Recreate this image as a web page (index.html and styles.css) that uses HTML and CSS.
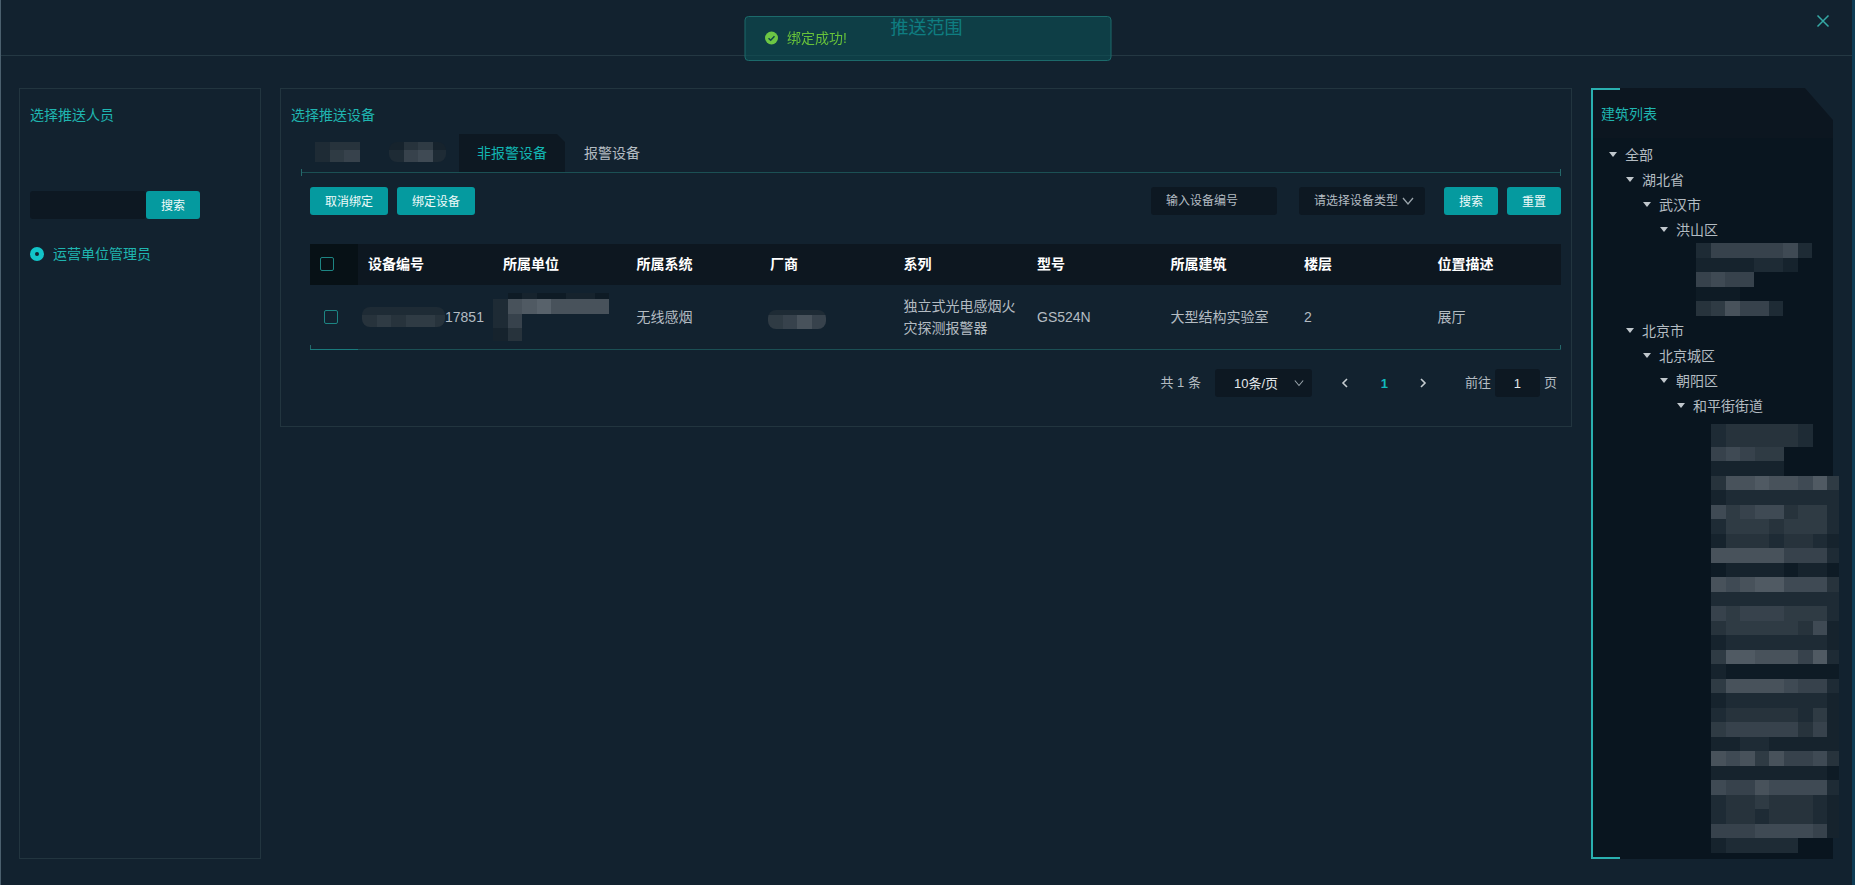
FILE: index.html
```html
<!DOCTYPE html>
<html lang="zh-CN">
<head>
<meta charset="utf-8">
<title>推送范围</title>
<link rel="stylesheet" href="styles.css">
</head>
<body>
<div class="dialog">
  <header class="dialog-header">
    <h1 class="dialog-title">推送范围</h1>
    <button class="close" type="button" aria-label="关闭">
      <svg viewBox="0 0 14 14" width="14" height="14"><path d="M1.500 1.500L12.500 12.500M12.500 1.500L1.500 12.500"/></svg>
    </button>
    <div class="toast" role="status">
      <svg viewBox="0 0 14 14" width="14" height="14"><circle cx="7" cy="7" r="6.500" fill="#6cc644"/><path d="M4 7.200L6.200 9.300L10 5.200" fill="none" stroke="#0e4a46" stroke-width="1.500"/></svg>
      <span>绑定成功!</span>
    </div>
  </header>

  <main class="columns">
    <section class="panel people">
      <h2 class="panel-title">选择推送人员</h2>
      <form class="people-search">
        <input class="field" type="text" aria-label="人员">
        <button class="btn" type="button">搜索</button>
      </form>
      <label class="person"><input class="radio" type="radio" name="person" checked><span>运营单位管理员</span></label>
    </section>

    <section class="panel devices">
      <h2 class="panel-title">选择推送设备</h2>
      <nav class="tabs">
        <button class="tab tab-first" type="button" aria-label="设备分类一"><svg class="mosaic" data-width="45" data-heights="8 12" data-rows="2333 2455"></svg></button>
        <button class="tab tab-second" type="button" aria-label="设备分类二"><svg class="mosaic rounded" data-width="57" data-heights="8 12" data-rows="1341 2562"></svg></button>
        <button class="tab active" type="button">非报警设备</button>
        <button class="tab" type="button">报警设备</button>
      </nav>
      <div class="toolbar">
        <button class="btn" type="button">取消绑定</button>
        <button class="btn" type="button">绑定设备</button>
        <input class="field device-code" type="text" placeholder="输入设备编号" aria-label="输入设备编号">
        <div class="select-box device-type">
          <select class="field" aria-label="设备类型"><option>请选择设备类型</option></select>
          <svg class="chevron" viewBox="0 0 12 12" width="12" height="12"><path d="M1 3L6 9L11 3"/></svg>
        </div>
        <button class="btn search" type="button">搜索</button>
        <button class="btn" type="button">重置</button>
      </div>

      <table class="table">
        <thead>
          <tr>
            <th class="pick"><input class="check" type="checkbox" aria-label="全选"></th>
            <th class="code-head">设备编号</th><th>所属单位</th><th>所属系统</th><th>厂商</th><th>系列</th><th>型号</th><th>所属建筑</th><th>楼层</th><th>位置描述</th>
          </tr>
        </thead>
        <tbody>
          <tr>
            <td class="pick"><input class="check" type="checkbox" aria-label="选择设备"></td>
            <td class="code"><span class="masked-code"><svg class="mosaic rounded" data-width="83" data-heights="8 12" data-rows="222222 343443"></svg>17851</span></td>
            <td class="unit"><svg class="mosaic" data-heights="6 15 14 13" data-rows=".0100110 27897777 25...... 13......"></svg></td>
            <td>无线感烟</td>
            <td class="vendor"><svg class="mosaic rounded" data-heights="5 14" data-rows="2222 4575"></svg></td>
            <td>独立式光电感烟火灾探测报警器</td>
            <td>GS524N</td>
            <td>大型结构实验室</td>
            <td>2</td>
            <td>展厅</td>
          </tr>
        </tbody>
      </table>

      <div class="pager">
        <span>共 1 条</span>
        <div class="select-box page-size">
          <select class="field" aria-label="每页条数"><option>10条/页</option></select>
          <svg class="chevron" viewBox="0 0 12 12" width="10" height="10"><path d="M1 3L6 9L11 3"/></svg>
        </div>
        <button class="page-btn" type="button" aria-label="上一页"><svg viewBox="0 0 8 10" width="8" height="10"><path d="M6 1L2 5L6 9"/></svg></button>
        <button class="page-btn current" type="button">1</button>
        <button class="page-btn" type="button" aria-label="下一页"><svg viewBox="0 0 8 10" width="8" height="10"><path d="M2 1L6 5L2 9"/></svg></button>
        <label class="jump">前往<input class="field" type="text" value="1">页</label>
      </div>
    </section>

    <section class="buildings">
      <h2 class="panel-title">建筑列表</h2>
      <ul class="tree">
        <li><div class="node">全部</div>
          <ul>
            <li><div class="node">湖北省</div>
              <ul><li><div class="node">武汉市</div>
                <ul><li><div class="node">洪山区</div>
                  <svg class="mosaic leaves" data-width="116" data-rows="2555556200 1111221. 5655.... 000..... 347552.."></svg>
                </li></ul>
              </li></ul>
            </li>
            <li><div class="node">北京市</div>
              <ul><li><div class="node">北京城区</div>
                <ul><li><div class="node">朝阳区</div>
                  <ul><li><div class="node">和平街街道</div>
                    <svg class="mosaic leaves street" data-width="128" data-heights="8" data-rows="2333332. 2333332. 56544... 11111... 377877684 122222222 645663442 244434442 133323321 777775552 011110110 767886663 222222222 545554442 344444361 122222221 488777582 100000000 477776552 122222221 233333241 455555351 112211111 767475563 111111110 655766662 233433321 233233321 555666651 122222.."></svg>
                  </li></ul>
                </li></ul>
              </li></ul>
            </li>
          </ul>
        </li>
      </ul>
    </section>
  </main>
</div>
<script src="mosaic.js"></script>
</body>
</html>
```

FILE: styles.css
```css
* { box-sizing: border-box; }

body {
  margin: 0;
  background: #12222f;
  color: #b4bcc2;
  font: 14px/20px "Liberation Sans", "Noto Sans CJK SC", sans-serif;
}

button, input, select { font-family: inherit; margin: 0; }
button { cursor: pointer; }
ul { list-style: none; margin: 0; padding: 0; }
svg { display: block; flex: none; }

.dialog {
  display: flex;
  flex-direction: column;
  min-height: 100vh;
  border-left: 1px solid #4b606e;
  border-right: 3px solid #0e3c54;
}

/* Header */
.dialog-header {
  position: relative;
  display: flex;
  justify-content: center;
  height: 56px;
  padding-top: 16px;
  border-bottom: 1px solid #243843;
}
.dialog-title {
  margin: 0;
  color: #12bfc0;
  font-size: 18px;
  font-weight: 400;
  line-height: 24px;
}
.close {
  position: absolute;
  top: 14px;
  right: 22px;
  padding: 0;
  border: 0;
  background: none;
}
.close path { fill: none; stroke: #35a9a5; stroke-width: 1.5; }
.toast {
  position: fixed;
  top: 16px;
  left: 50%;
  transform: translateX(-50%);
  z-index: 2;
  display: flex;
  align-items: center;
  gap: 9px;
  width: 367px;
  height: 45px;
  padding: 0 19px 2px;
  border: 1px solid #1c6a6b;
  border-radius: 4px;
  background: rgba(11, 82, 86, 0.6);
  color: #67c23a;
}

/* Columns */
.columns {
  flex: 1;
  display: flex;
  gap: 19px;
  padding: 32px 19px 26px 18px;
}
.panel { border: 1px solid #22353f; }
.panel-title {
  margin: 0;
  padding: 16px 10px 1px;
  color: #1fb5b0;
  font-size: 14px;
  font-weight: 400;
  line-height: 20px;
}

.btn {
  height: 28px;
  padding: 0 15px 2px;
  border: 0;
  border-radius: 3px;
  background: #059a9f;
  color: #f0fafa;
  font-size: 12px;
  white-space: nowrap;
}
.field {
  width: 100%;
  height: 28px;
  padding: 0 15px;
  border: 0;
  border-radius: 3px;
  background: #0d1822;
  color: #b4bcc2;
  font-size: 12px;
  appearance: none;
}
.field::placeholder { color: #b4bcc2; opacity: 1; }
.select-box { position: relative; }
.chevron {
  position: absolute;
  top: 50%;
  right: 11px;
  transform: translateY(-50%);
  pointer-events: none;
}
.chevron path { fill: none; stroke: #9aa4ab; stroke-width: 1.3; }

/* People */
.people { flex: 0 0 242px; }
.people-search { display: flex; padding: 65px 10px 0; }
.people-search .field { width: 116px; }
.person {
  display: flex;
  align-items: center;
  gap: 9px;
  padding: 25px 10px 0;
  color: #1fb5b0;
}
.radio {
  width: 14px;
  height: 14px;
  border: 5px solid #12c4c8;
  border-radius: 50%;
  background: #12222f;
  appearance: none;
}

/* Devices */
.devices {
  flex: 1;
  min-width: 0;
  align-self: flex-start;
  padding-bottom: 29px;
}
.tabs {
  display: flex;
  position: relative;
  height: 39px;
  margin: 8px 10px 0 20px;
  border-bottom: 1px solid #1b5054;
}
.tabs::before, .tabs::after {
  content: "";
  position: absolute;
  bottom: -4px;
  width: 1px;
  height: 7px;
  background: #24686a;
}
.tabs::before { left: 0; }
.tabs::after { right: 0; }
.tab {
  height: 38px;
  padding: 0 19px 3px;
  border: 0;
  background: none;
  color: #b4bcc2;
  font-size: 14px;
}
.tab-first { width: 75px; padding: 0 14px 2px; }
.tab-second { width: 83px; padding: 0 13px 2px; }
.tab.active {
  padding: 0 18px 3px;
  background: #0d1822;
  color: #12b5b2;
  clip-path: polygon(0 0, calc(100% - 8px) 0, 100% 8px, 100% 100%, 0 100%);
}
.toolbar {
  display: flex;
  gap: 9px;
  padding: 14px 10px 0 29px;
}
.device-code { width: 126px; margin-left: auto; }
.device-type { width: 126px; margin-left: 13px; }
.toolbar .search { margin-left: 10px; }

.table {
  width: calc(100% - 39px);
  margin: 29px 10px 0 29px;
  border-collapse: separate;
  border-spacing: 0;
  table-layout: fixed;
  background:
    linear-gradient(#24686a, #24686a) left bottom / 1px 5px no-repeat,
    linear-gradient(#24686a, #24686a) right bottom / 1px 5px no-repeat;
}
.table th {
  height: 41px;
  padding: 0 10px 2px;
  background: #0d1720;
  color: #fff;
  font-size: 14px;
  font-weight: 700;
  text-align: left;
}
.table td {
  height: 65px;
  padding: 0 10px;
  border-bottom: 1px solid #1b4f54;
  line-height: 22px;
}
.table .pick { width: 48px; }
.table .code-head { width: 135px; }
.table th.pick { background: #071116; }
.table td.pick { padding-left: 14px; border-color: #197a7c; }
.table td.code { padding-left: 4px; }
.table td.unit { padding: 0; }
.table td.vendor { padding: 4px 8px 0; }
.masked-code { display: flex; align-items: center; }
.check {
  display: block;
  width: 14px;
  height: 14px;
  border: 1px solid #1d8583;
  border-radius: 2px;
  background: none;
  appearance: none;
}
.rounded { border-radius: 8px; }

.pager {
  display: flex;
  align-items: center;
  justify-content: flex-end;
  padding: 19px 14px 0;
  font-size: 13px;
}
.page-size { width: 97px; margin: 0 14px; }
.page-size .field { padding: 0 19px; color: #e3e7ea; font-size: 13px; }
.page-size .chevron { right: 8px; }
.page-btn {
  display: flex;
  align-items: center;
  justify-content: center;
  width: 39px;
  height: 28px;
  padding: 0;
  border: 0;
  background: none;
  font-size: 13px;
  font-weight: 700;
}
.page-btn path { fill: none; stroke: #c6cdd1; stroke-width: 1.6; }
.page-btn.current { color: #12b9bd; }
.jump { display: flex; align-items: center; margin-left: 22px; }
.jump .field {
  width: 45px;
  margin: 0 4px;
  padding: 0;
  color: #e3e7ea;
  font-size: 13px;
  text-align: center;
}

/* Buildings */
.buildings {
  position: relative;
  z-index: 0;
  flex: 0 0 242px;
  border-left: 2px solid #2ab0b0;
}
.buildings::before {
  content: "";
  position: absolute;
  z-index: -1;
  inset: 0;
  background: linear-gradient(#0c1620 50px, #09151f 50px);
  clip-path: polygon(0 0, calc(100% - 28px) 0, 100% 32px, 100% 100%, 0 100%);
}
.buildings::after {
  content: "";
  position: absolute;
  top: 0;
  bottom: 0;
  left: 0;
  width: 27px;
  border: solid #2ab0b0;
  border-width: 2px 0;
  pointer-events: none;
}
.buildings .panel-title { padding: 16px 8px 1px; }
.tree { padding: 17px 0 0 16px; }
.tree ul { padding-left: 17px; }
.node {
  display: flex;
  align-items: center;
  gap: 8px;
  height: 25px;
}
.node::before {
  content: "";
  border: solid transparent;
  border-width: 5px 4px 0;
  border-top-color: #c0c7cc;
}
.leaves { margin: 1px 0 2px 36px; }
.street { margin: 6px -12px -12px 34px; }
```

FILE: mosaic.js
```js
// Draws masked content: each digit in data-rows is the brightness of one cell.
// data-heights overrides the height of the first rows, data-width clips the right edge.
const CELL = 29 / 2;
const NS = "http://www.w3.org/2000/svg";

function shade(level) {
  const from = [14, 27, 37];
  const to = [88, 98, 107];
  return "rgb(" + from.map((v, i) => Math.round(v + (to[i] - v) * level / 9)).join(",") + ")";
}

document.querySelectorAll(".mosaic").forEach((svg) => {
  const rows = svg.dataset.rows.split(" ");
  const heights = (svg.dataset.heights || "").split(" ").filter(Boolean).map(Number);
  const cols = Math.max(...rows.map((r) => r.length));
  let bottom = 0;
  rows.forEach((row, i) => {
    const top = Math.round(bottom);
    bottom += heights[i] || CELL;
    [...row].forEach((c, x) => {
      if (c === ".") return;
      const left = Math.round(x * CELL);
      const rect = document.createElementNS(NS, "rect");
      rect.setAttribute("x", left);
      rect.setAttribute("y", top);
      rect.setAttribute("width", Math.round((x + 1) * CELL) - left);
      rect.setAttribute("height", Math.round(bottom) - top);
      rect.setAttribute("fill", shade(Number(c)));
      svg.append(rect);
    });
  });
  svg.setAttribute("width", svg.dataset.width || Math.round(cols * CELL));
  svg.setAttribute("height", Math.round(bottom));
});
```
